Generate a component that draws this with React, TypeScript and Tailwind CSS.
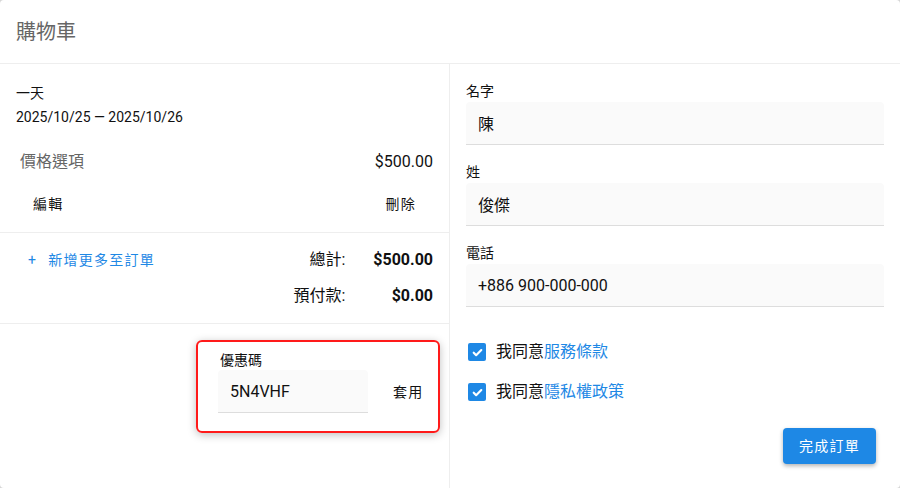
import React, { useState } from 'react';

const font = "font-['Roboto','Noto_Sans_CJK_TC',sans-serif]";

interface FieldProps {
  label: string;
  value: string;
  onChange: (v: string) => void;
}

const Field: React.FC<FieldProps> = ({ label, value, onChange }) => (
  <div className="mb-[17px]">
    <div className="h-[20px] mb-px text-[14px] leading-[20px] text-[#111]">{label}</div>
    <input
      value={value}
      onChange={(e) => onChange(e.target.value)}
      className="w-full h-[43px] px-3 bg-[#fafafa] rounded-t-[4px] border-b border-[#dddddd] text-[16px] text-[#111] outline-none"
    />
  </div>
);

const Check: React.FC<{ checked: boolean; onToggle: () => void; link: string }> = ({ checked, onToggle, link }) => (
  <label className="flex items-center h-[40px] cursor-pointer">
    <button
      onClick={onToggle}
      className={`w-[18px] h-[18px] rounded-[2px] flex items-center justify-center ml-[2px] ${
        checked ? 'bg-[#1e88e5]' : 'border-2 border-[#757575] bg-white'
      }`}
    >
      {checked && (
        <svg width="13" height="13" viewBox="0 0 24 24" fill="none" stroke="white" strokeWidth="4" strokeLinecap="round" strokeLinejoin="round">
          <path d="M5 12.5l4.5 4.5L19 7.5" />
        </svg>
      )}
    </button>
    <span className="ml-[10px] text-[16px] text-[#111]">
      我同意<a className="text-[#1e88e5]">{link}</a>
    </span>
  </label>
);

export default function App() {
  const [firstName, setFirstName] = useState('陳');
  const [lastName, setLastName] = useState('俊傑');
  const [phone, setPhone] = useState('+886 900-000-000');
  const [coupon, setCoupon] = useState('5N4VHF');
  const [terms, setTerms] = useState(true);
  const [privacy, setPrivacy] = useState(true);

  return (
    <div className={`w-[900px] h-[488px] bg-[#d6d6d6] ${font}`}>
      <div className="w-full h-full bg-white rounded-[4px] flex flex-col overflow-hidden">
        {/* Header */}
        <div className="h-[64px] px-4 flex items-center border-b border-[#eeeeee] text-[20px] text-[#666666]">
          購物車
        </div>

        <div className="flex flex-1">
          {/* Left: order */}
          <div className="w-[450px] border-r border-[#eeeeee]">
            <div className="px-4 pt-[17px] text-[14px] leading-[24px] text-[#111]">
              <div>一天</div>
              <div>2025/10/25 — 2025/10/26</div>
            </div>

            <div className="flex items-center justify-between pl-5 pr-4 mt-[21px] h-[24px]">
              <span className="text-[16px] text-[#666666]">價格選項</span>
              <span className="text-[16px] text-[#111]">$500.00</span>
            </div>

            <div className="flex items-center justify-between pl-[21px] pr-[21px] mt-[8px] h-[44px] text-[14px] tracking-[0.09em] text-[#111]">
              <button className="px-3 h-[36px]">編輯</button>
              <button className="px-[12px] h-[36px]">刪除</button>
            </div>

            <div className="border-b border-[#eeeeee] mt-[6px]" />

            <div className="flex pl-[28px] pr-4 pt-[15px] pb-[15px] border-b border-[#eeeeee]">
              <button className="flex items-start text-[14px] leading-[24px] tracking-[0.09em] text-[#1e88e5] h-[24px]">
                <span className="mr-[11px]">+</span>新增更多至訂單
              </button>
              <div className="ml-auto grid grid-cols-[auto_auto] gap-x-[28px] gap-y-[12px] text-[16px] leading-[24px] text-[#111]">
                <span className="text-right">總計:</span>
                <span className="text-right font-bold">$500.00</span>
                <span className="text-right">預付款:</span>
                <span className="text-right font-bold">$0.00</span>
              </div>
            </div>

            <div className="flex justify-end pr-[9px] pt-[16px]">
              <div className="w-[244px] h-[93px] rounded-[6px] border-2 border-[#ff1a1a] shadow-[0_2px_8px_rgba(0,0,0,0.25)] pl-[20px] pt-[8px]">
                <div className="text-[14px] leading-[20px] text-[#111] ml-[2px]">優惠碼</div>
                <div className="flex items-center">
                  <input
                    value={coupon}
                    onChange={(e) => setCoupon(e.target.value)}
                    className="w-[150px] h-[43px] px-3 bg-[#fafafa] rounded-t-[4px] border-b border-[#dddddd] text-[16px] text-[#111] outline-none"
                  />
                  <button className="ml-[13px] px-3 h-[36px] mt-[2px] text-[14px] tracking-[0.09em] text-[#111]">套用</button>
                </div>
              </div>
            </div>
          </div>

          {/* Right: customer */}
          <div className="flex-1 flex flex-col pl-4 pr-4 pt-[17px]">
            <Field label="名字" value={firstName} onChange={setFirstName} />
            <Field label="姓" value={lastName} onChange={setLastName} />
            <Field label="電話" value={phone} onChange={setPhone} />

            <div className="mt-[8px]">
              <Check checked={terms} onToggle={() => setTerms(!terms)} link="服務條款" />
              <Check checked={privacy} onToggle={() => setPrivacy(!privacy)} link="隱私權政策" />
            </div>

            <div className="flex justify-end pr-[8px] mt-[16px]">
              <button className="w-[93px] h-[36px] rounded-[4px] bg-[#1e88e5] text-white text-[14px] tracking-[0.09em] shadow-[0_2px_4px_rgba(0,0,0,0.3)]">
                完成訂單
              </button>
            </div>
          </div>
        </div>
      </div>
    </div>
  );
}
